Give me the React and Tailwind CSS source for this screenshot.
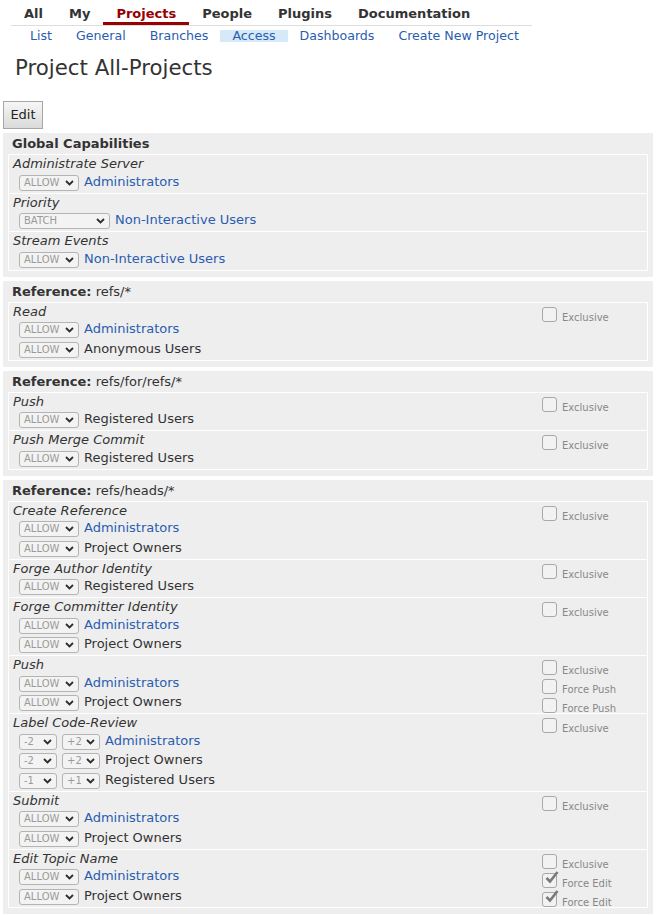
import React from "react";

const A = "ALLOW";

const SECTIONS = [
    {
        title: "Global Capabilities",
        perms: [
            { name: "Administrate Server", rules: [{ sel: [A], group: "Administrators", link: true }] },
            { name: "Priority", rules: [{ sel: ["BATCH"], wide: true, group: "Non-Interactive Users", link: true }] },
            { name: "Stream Events", rules: [{ sel: [A], group: "Non-Interactive Users", link: true }] },
        ],
    },
    {
        ref: "refs/*",
        perms: [
            {
                name: "Read",
                checks: [{ label: "Exclusive" }],
                rules: [
                    { sel: [A], group: "Administrators", link: true },
                    { sel: [A], group: "Anonymous Users" },
                ],
            },
        ],
    },
    {
        ref: "refs/for/refs/*",
        perms: [
            { name: "Push", checks: [{ label: "Exclusive" }], rules: [{ sel: [A], group: "Registered Users" }] },
            { name: "Push Merge Commit", checks: [{ label: "Exclusive" }], rules: [{ sel: [A], group: "Registered Users" }] },
        ],
    },
    {
        ref: "refs/heads/*",
        perms: [
            {
                name: "Create Reference",
                checks: [{ label: "Exclusive" }],
                rules: [
                    { sel: [A], group: "Administrators", link: true },
                    { sel: [A], group: "Project Owners" },
                ],
            },
            { name: "Forge Author Identity", checks: [{ label: "Exclusive" }], rules: [{ sel: [A], group: "Registered Users" }] },
            {
                name: "Forge Committer Identity",
                checks: [{ label: "Exclusive" }],
                rules: [
                    { sel: [A], group: "Administrators", link: true },
                    { sel: [A], group: "Project Owners" },
                ],
            },
            {
                name: "Push",
                checks: [{ label: "Exclusive" }, { label: "Force Push" }, { label: "Force Push" }],
                rules: [
                    { sel: [A], group: "Administrators", link: true },
                    { sel: [A], group: "Project Owners" },
                ],
            },
            {
                name: "Label Code-Review",
                checks: [{ label: "Exclusive" }],
                rules: [
                    { sel: ["-2", "+2"], narrow: true, group: "Administrators", link: true },
                    { sel: ["-2", "+2"], narrow: true, group: "Project Owners" },
                    { sel: ["-1", "+1"], narrow: true, group: "Registered Users" },
                ],
            },
            {
                name: "Submit",
                checks: [{ label: "Exclusive" }],
                rules: [
                    { sel: [A], group: "Administrators", link: true },
                    { sel: [A], group: "Project Owners" },
                ],
            },
            {
                name: "Edit Topic Name",
                checks: [{ label: "Exclusive" }, { label: "Force Edit", checked: true }, { label: "Force Edit", checked: true }],
                rules: [
                    { sel: [A], group: "Administrators", link: true },
                    { sel: [A], group: "Project Owners" },
                ],
            },
        ],
    },
];

const TABS = ["All", "My", "Projects", "People", "Plugins", "Documentation"];
const SUBTABS = ["List", "General", "Branches", "Access", "Dashboards", "Create New Project"];

const Chevron = () => (
    <svg width="9" height="6" viewBox="0 0 9 6" className="shrink-0">
        <path d="M1 1 L4.5 4.5 L8 1" fill="none" stroke="#2e2e2e" strokeWidth="1.8" />
    </svg>
);

const FakeSelect = ({ value, width }) => (
    <div
        className={`flex h-[16px] items-center justify-between rounded-[3px] border border-[#b4b4b4] bg-[#f3f3f3] pl-[4px] pr-[4px] text-[10px] leading-none text-[#9a9a9a] ${width}`}
    >
        <span>{value}</span>
        <Chevron />
    </div>
);

const Checkbox = ({ label, checked }) => (
    <div className="flex h-[19px] items-start">
        <div className="relative h-[15px] w-[15px] shrink-0 rounded-[3px] border border-[#a8a8a8] bg-[#f2f2f2]">
            {checked && (
                <svg width="16" height="14" viewBox="0 0 16 14" className="absolute left-[1px] top-[-4px]">
                    <path d="M2.5 8 L6 11.5 L13.5 2" fill="none" stroke="#7a7a7a" strokeWidth="2.6" />
                </svg>
            )}
        </div>
        <span className="ml-[5px] mt-[5px] text-[10px] leading-[12px] text-[#888]">{label}</span>
    </div>
);

const Rule = ({ rule }) => {
    const width = rule.wide ? "w-[91px]" : rule.narrow ? "w-[38px]" : "w-[60px]";
    return (
        <div className="flex h-[19.5px] items-center gap-[5px] pl-[10px]">
            {rule.sel.map((s, i) => (
                <FakeSelect key={i} value={s} width={width} />
            ))}
            <span className={`mb-[3px] ${rule.link ? "text-[#2a5db0]" : "text-[#333]"}`}>{rule.group}</span>
        </div>
    );
};

const Permission = ({ perm }) => (
    <div className="flex border-t border-white">
        <div className="flex-1">
            <div className="pl-[4px] italic leading-[18px]">{perm.name}</div>
            {perm.rules.map((r, i) => (
                <Rule key={i} rule={r} />
            ))}
        </div>
        {perm.checks && (
            <div className="h-0 w-[105px] overflow-visible pt-[4px]">
                {perm.checks.map((c, i) => (
                    <Checkbox key={i} label={c.label} checked={c.checked} />
                ))}
            </div>
        )}
    </div>
);

const Section = ({ section }) => (
    <div className="mt-[4px] w-[650px] bg-[#eeeeee] px-[5px] pb-[6px]">
        <div className="pl-[4px] pt-[1px] leading-[20px]">
            {section.title ? (
                <span className="font-bold">{section.title}</span>
            ) : (
                <>
                    <span className="font-bold">Reference:</span> {section.ref}
                </>
            )}
        </div>
        <div className="border-x border-b border-white">
            {section.perms.map((p, i) => (
                <Permission key={i} perm={p} />
            ))}
        </div>
    </div>
);

export default function App() {
    return (
        <div className="min-h-[916px] bg-white font-['DejaVu_Sans',sans-serif] text-[13px] text-[#333]">
            <div className="pl-[11px]">
                <div className="flex w-[521px] border-b border-[#dddddd]">
                    {TABS.map((t) => (
                        <div
                            key={t}
                            className={`px-[13px] pt-[5px] text-[13px] font-bold leading-[17px] border-b-[3px] ${
                                t === "Projects" ? "border-[#990000] text-[#990000]" : "border-transparent text-[#333]"
                            }`}
                        >
                            {t}
                        </div>
                    ))}
                </div>
                <div className="mt-[4px] flex pl-[7px] text-[12.6px]">
                    {SUBTABS.map((t) => (
                        <div
                            key={t}
                            className={`h-[12px] px-[12px] leading-[12px] text-[#2a5db0] ${t === "Access" ? "bg-[#d6e9f8]" : ""}`}
                        >
                            {t}
                        </div>
                    ))}
                </div>
            </div>
            <div className="pl-[15px] pt-[13px] text-[21.3px] leading-[26px]">Project All-Projects</div>
            <div className="pl-[3px] pt-[20px]">
                <button className="block h-[28px] w-[40px] border border-[#a6a6a6] bg-linear-to-b from-[#f6f6f6] to-[#dadada] text-[13px] text-[#222]">
                    Edit
                </button>
            </div>
            <div className="pl-[3px]">
                {SECTIONS.map((s, i) => (
                    <Section key={i} section={s} />
                ))}
            </div>
        </div>
    );
}
